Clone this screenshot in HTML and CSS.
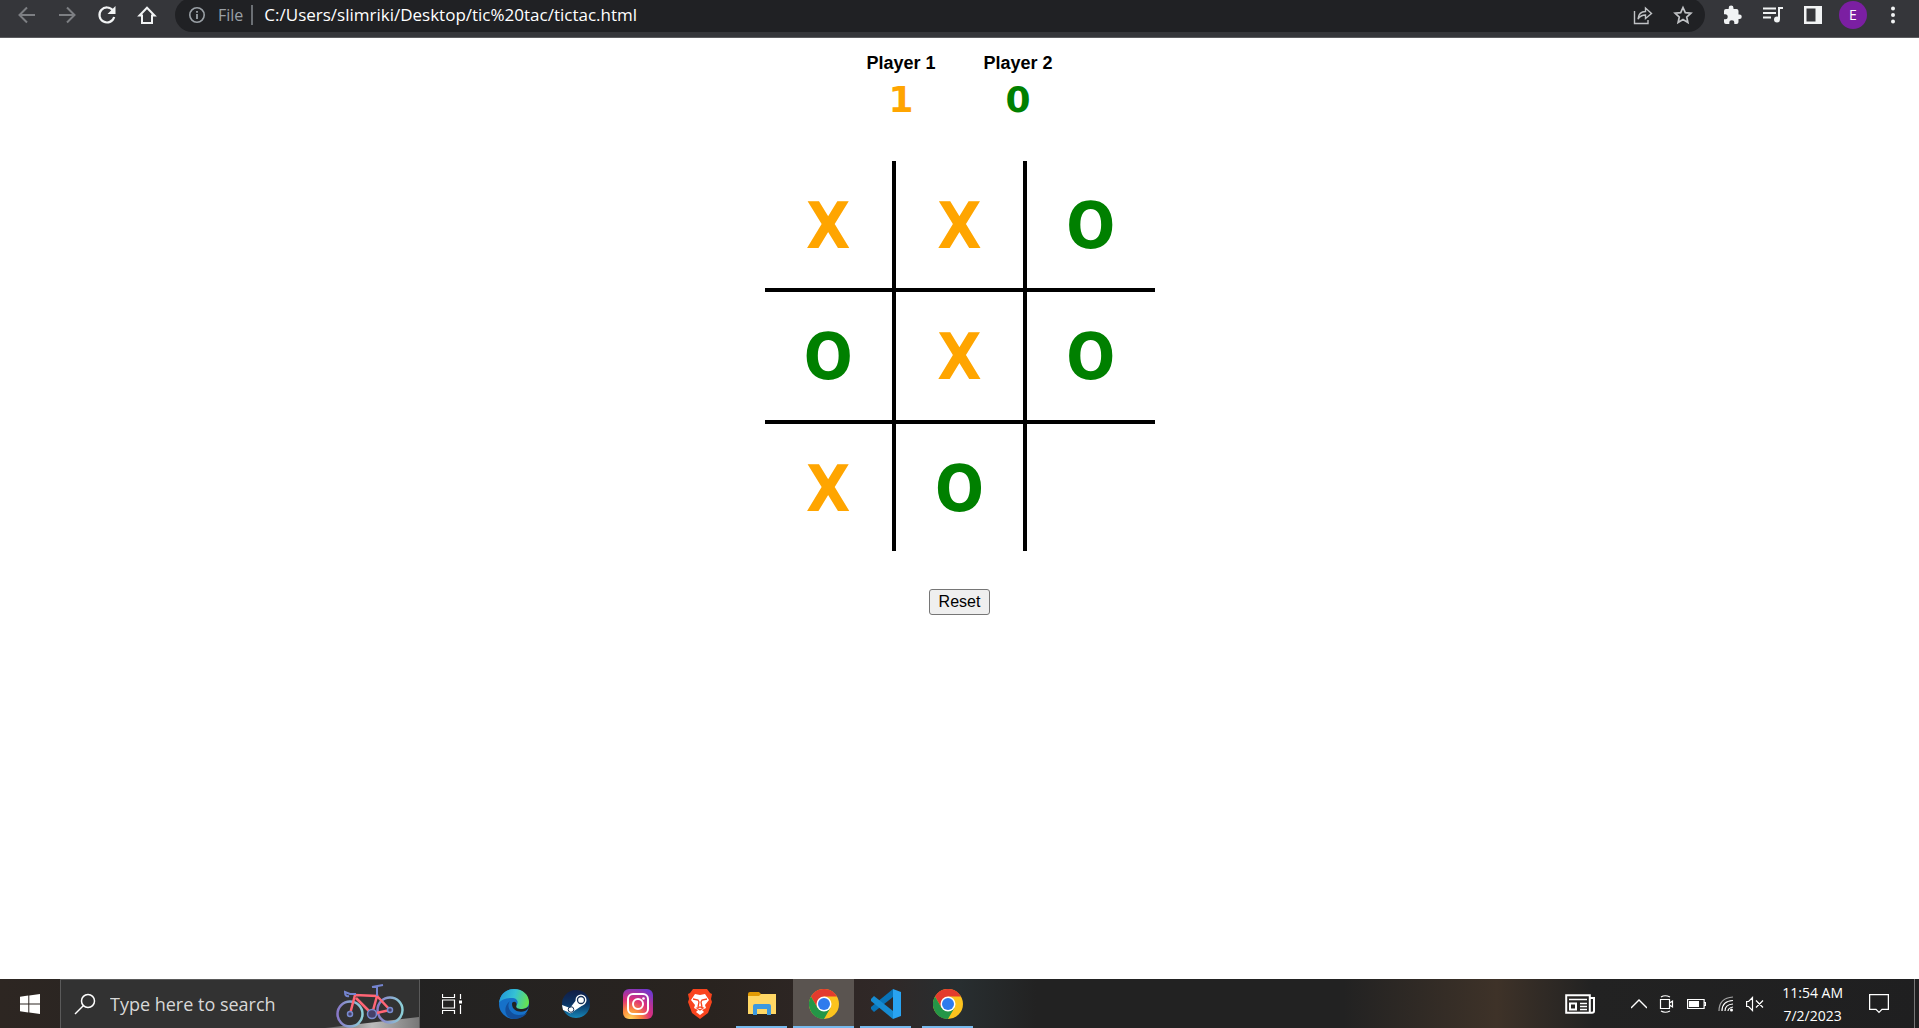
FILE: index.html
```html
<!DOCTYPE html>
<html lang="en">
<head>
<meta charset="utf-8">
<title>Tic Tac Toe</title>
<link rel="stylesheet" href="styles.css">
</head>
<body>
<header class="toolbar">
  <nav class="nav">
    <button class="icon-btn dim" aria-label="Back"><svg width="20" height="20" viewBox="0 0 20 20"><path d="M18 10H3M10 2.500l-7.500 7.500 7.500 7.500" fill="none" stroke="currentColor" stroke-width="2"/></svg></button>
    <button class="icon-btn dim" aria-label="Forward"><svg width="20" height="20" viewBox="0 0 20 20"><path d="M2 10h15M10 2.500l7.500 7.500-7.500 7.500" fill="none" stroke="currentColor" stroke-width="2"/></svg></button>
    <button class="icon-btn" aria-label="Reload"><svg width="20" height="20" viewBox="0 0 20 20"><path d="M16 5.500A7.500 7.500 0 1 0 17.200 12" fill="none" stroke="currentColor" stroke-width="2.200"/><path d="M18.500 1v8h-8z" fill="currentColor"/></svg></button>
    <button class="icon-btn" aria-label="Home"><svg width="20" height="20" viewBox="0 0 20 20"><path d="M2.500 10.500L10 2.800l7.500 7.700H15V18H5v-7.500z" fill="none" stroke="currentColor" stroke-width="2"/></svg></button>
  </nav>
  <div class="omnibox">
    <svg class="info" width="18" height="18" viewBox="0 0 18 18"><circle cx="9" cy="9" r="7.200" fill="none" stroke="currentColor" stroke-width="1.600"/><path d="M9 8v5M9 5v1.800" stroke="currentColor" stroke-width="1.800"/></svg>
    <span class="scheme">File</span>
    <input class="url" aria-label="Address" value="C:/Users/slimriki/Desktop/tic%20tac/tictac.html">
    <button class="icon-btn soft" aria-label="Share"><svg width="20" height="20" viewBox="0 0 20 20"><path d="M1.500 6v12.500H15V15M5 14c.500-5 3-7.500 7.500-7.500V3l6 5.500-6 5V10C9 10 7 11 5 14z" fill="none" stroke="currentColor" stroke-width="1.400"/></svg></button>
    <button class="icon-btn soft" aria-label="Bookmark"><svg width="20" height="20" viewBox="0 0 20 20"><path d="M10 2.500l2.300 5.200 5.600.500-4.200 3.800 1.200 5.500-4.900-2.900-4.900 2.900 1.200-5.500L2.100 8.200l5.600-.500z" fill="none" stroke="currentColor" stroke-width="1.700"/></svg></button>
  </div>
  <div class="actions">
    <button class="icon-btn" aria-label="Extensions"><svg width="20" height="20" viewBox="0 0 20 20"><path d="M16.500 9.500H15.500V6A2 2 0 0 0 13.500 4H10.500V3A2.400 2.400 0 0 0 5.700 3V4H3A2 2 0 0 0 1 6V9.300H2.200A2.500 2.500 0 0 1 2.200 14.300H1V17A2 2 0 0 0 3 19H6.300V17.800A2.500 2.500 0 0 1 11.300 17.800V19H13.500A2 2 0 0 0 15.500 17V14H16.500A2.250 2.250 0 0 0 16.500 9.500Z" fill="currentColor"/></svg></button>
    <button class="icon-btn" aria-label="Media controls"><svg width="20" height="20" viewBox="0 0 20 20"><path d="M0 3.500h13M0 8h13M0 12.500h8M16 14V3h4" fill="none" stroke="currentColor" stroke-width="2"/><circle cx="14" cy="14.500" r="3" fill="currentColor"/></svg></button>
    <button class="icon-btn" aria-label="Side panel"><svg width="20" height="20" viewBox="0 0 20 20"><path d="M1 1h18v18H1zM3.500 3.500v13h9v-13z" fill="currentColor" fill-rule="evenodd"/></svg></button>
    <button class="avatar" aria-label="Profile">E</button>
    <button class="icon-btn" aria-label="Menu"><svg width="20" height="20" viewBox="0 0 20 20"><g fill="currentColor"><circle cx="10" cy="3.500" r="2"/><circle cx="10" cy="10" r="2"/><circle cx="10" cy="16.500" r="2"/></g></svg></button>
  </div>
</header>

<main class="game">
  <section class="scores">
    <div class="player"><h2 class="name">Player 1</h2><div class="score x">1</div></div>
    <div class="player"><h2 class="name">Player 2</h2><div class="score o">0</div></div>
  </section>
  <section class="board">
    <div class="cell x">X</div><div class="cell x">X</div><div class="cell o">O</div>
    <div class="cell o">O</div><div class="cell x">X</div><div class="cell o">O</div>
    <div class="cell x">X</div><div class="cell o">O</div><div class="cell"></div>
  </section>
  <button class="reset">Reset</button>
</main>

<footer class="taskbar">
  <button class="start" aria-label="Start"><svg width="20" height="20" viewBox="0 0 20 20"><path d="M0 2.800L8.300 1.600V9.500H0zM9.300 1.400L20 0v9.500H9.300zM0 10.500h8.300v7.900L0 17.200zM9.300 10.500H20V20L9.300 18.600z" fill="#fff"/></svg></button>
  <label class="search">
    <svg width="22" height="22" viewBox="0 0 22 22"><circle cx="14" cy="8" r="6.500" fill="none" stroke="#fff" stroke-width="1.500"/><path d="M9.500 12.500L1 21" stroke="#fff" stroke-width="1.500"/></svg>
    <input class="query" aria-label="Search" placeholder="Type here to search">
    <svg class="bike" width="96" height="48" viewBox="0 0 96 48">
      <defs><linearGradient id="wheel"><stop offset="0" stop-color="#8878c8"/><stop offset="1" stop-color="#8cd0d8"/></linearGradient><linearGradient id="hill"><stop offset="0" stop-color="#555"/><stop offset=".5" stop-color="#bbb"/><stop offset="1" stop-color="#777"/></linearGradient></defs>
      <path d="M2 48L96 37V48z" fill="url(#hill)"/>
      <g fill="none" stroke="url(#wheel)" stroke-width="2.500"><circle cx="27" cy="34" r="12.500"/><circle cx="67" cy="30" r="12.500"/></g>
      <path d="M27 34L32 15 54 16 49 34 33 18M54 16L67 30 49 34" fill="none" stroke="#ff6575" stroke-width="2.500"/>
      <path d="M33 14h-6l-5-2q0 5 4 4M54 16V6M49 7l11-2" fill="none" stroke="#7484cf" stroke-width="2"/>
      <g fill="#45406a" stroke="#788bcf" stroke-width="1.500"><circle cx="27" cy="34" r="2.500"/><circle cx="67" cy="30" r="2.500"/><circle cx="49" cy="34" r="4.500"/></g>
    </svg>
  </label>
  <nav class="apps">
    <button class="app" aria-label="Task view"><svg width="20" height="20" viewBox="0 0 20 20"><path d="M.5 0v3.500h12V0M.5 6h12v8H.5zM.5 20v-3.500h12V20M18.500 0v5M18.500 11v9" fill="none" stroke="#fff" stroke-width="1.200"/><path d="M17 6.500h3v3h-3z" fill="#fff"/></svg></button>
    <button class="app" aria-label="Edge"><svg width="30" height="30" viewBox="0 0 30 30"><defs><linearGradient id="eg" x1="0" y1=".3" x2="1" y2=".5"><stop offset="0" stop-color="#2196d8"/><stop offset=".5" stop-color="#35c1d5"/><stop offset="1" stop-color="#66e34f"/></linearGradient></defs><circle cx="15" cy="15" r="15" fill="#1671c9"/><path d="M0 14C1 5 7 0 15 0c9 0 15 6 15 13 0 5-4 7-7 7-5 0-7-1-6-3 4-5 0-8-4-8C7 9 2 11 0 14z" fill="url(#eg)"/><path d="M11 12c-4 5 0 14 9 14 4 0 6-1 8-2-3 4-8 6-13 6C6 30 3 18 11 12z" fill="#124f9c"/><path d="M13 15c0-3 5-3 4.500 1-1 3 1 4 5.500 4 3 0 5-1 7-3-1 3-2 4-4 5-5 2-13 0-13-7z" fill="#222"/></svg></button>
    <button class="app" aria-label="Steam"><svg width="30" height="30" viewBox="0 0 30 30"><defs><linearGradient id="st" x2="0" y2="1"><stop stop-color="#111d45"/><stop offset=".5" stop-color="#0b3464"/><stop offset="1" stop-color="#1687b8"/></linearGradient></defs><circle cx="15" cy="15" r="14" fill="url(#st)"/><path d="M1 16l8 3 7-9 6 6-9 6q-3 4-6 1l-5-2z" fill="#fff"/><circle cx="20" cy="11" r="5.500" fill="#fff"/><circle cx="20" cy="11" r="3.500" fill="none" stroke="#173157" stroke-width="1.300"/><circle cx="10" cy="20.500" r="2.800" fill="none" stroke="#173157"/></svg></button>
    <button class="app" aria-label="Instagram"><svg width="30" height="30" viewBox="0 0 30 30"><defs><radialGradient id="ig" cx=".25" cy="1" r="1.100"><stop stop-color="#ffd55b"/><stop offset=".3" stop-color="#fb8a3c"/><stop offset=".6" stop-color="#dd2f79"/><stop offset="1" stop-color="#7138cc"/></radialGradient></defs><rect width="30" height="30" rx="6" fill="url(#ig)"/><rect x="5" y="5" width="20" height="20" rx="5" fill="none" stroke="#fff" stroke-width="2"/><circle cx="15" cy="15" r="5" fill="none" stroke="#fff" stroke-width="2"/><circle cx="20.500" cy="9.500" r="1.300" fill="#fff"/></svg></button>
    <button class="app" aria-label="Brave"><svg width="30" height="30" viewBox="0 0 30 30"><path d="M8 0h14l3 4 2 1-1 5 1 3-4 11-8 6-8-6L3 13l1-3-1-5 2-1z" fill="#f9441d"/><path d="M10 5l5 1 5-1 4 6-4 5 1 3-4 2 2 2-4 3-4-3 2-2-4-2 1-3-4-5z" fill="#fff"/><path d="M8 10l5 1 1 2-1 5M22 10l-5 1-1 2 1 5M12 19l3-1 3 1-3 2z" fill="none" stroke="#f9441d" stroke-width="1.300"/></svg></button>
    <button class="app open" aria-label="File Explorer"><svg width="30" height="30" viewBox="0 0 30 30"><path d="M1 5q0-2 2-2h9l2 2v3H1z" fill="#e29b05"/><path d="M1 7h11l2-2h15v20H1z" fill="#ffd765"/><path d="M6 26V17q0-2 2-2h14q2 0 2 2v9h-4v-6h-10v6z" fill="#3c99e0"/></svg></button>
    <button class="app open active" aria-label="Chrome"><svg width="30" height="30" viewBox="0 0 30 30"><g id="chrome"><circle cx="15" cy="15" r="15" fill="#fcc31e"/><path d="M2 7.500A15 15 0 0 1 28 7.500H15L8.500 18.800z" fill="#e33b2e"/><path d="M2 7.500A15 15 0 0 0 15 30L21.500 18.800H8.500z" fill="#249647"/><circle cx="15" cy="15" r="7.500" fill="#fff"/><circle cx="15" cy="15" r="6" fill="#2f7bed"/></g></svg></button>
    <button class="app open" aria-label="Visual Studio Code"><svg width="30" height="30" viewBox="0 0 30 30"><path d="M22 0v8L3 23l-3-3v-2z" fill="#0873b8"/><path d="M22 30v-8L3 7 0 10v2z" fill="#168bd2"/><path d="M22 0l8 3v24l-8 3z" fill="#29a3f1"/></svg></button>
    <button class="app open" aria-label="Chrome, second window"><svg width="30" height="30" viewBox="0 0 30 30"><use href="#chrome"/></svg></button>
  </nav>
  <div class="tray">
    <svg class="news" width="30" height="20" viewBox="0 0 30 20"><path d="M1.200 1.200h23.600V18.800H1.200zM25 4h4v13q0 1.800-2 1.800H24" fill="none" stroke="#fff" stroke-width="2"/><path d="M4 5.500h18M15 9.500h7M15 12.500h7M15 15.500h7" stroke="#fff" stroke-width="1.500"/><path d="M5 9.500h6v6H5z" fill="none" stroke="#fff" stroke-width="2"/></svg>
    <svg width="16" height="18" viewBox="0 0 16 18"><path d="M0 13l8-8 8 8" fill="none" stroke="#fff" stroke-width="1.400"/></svg>
    <svg width="16" height="18" viewBox="0 0 16 18"><path d="M1.500 4.500h9v9h-9zM10.500 8l3-2v6l-3-2M2 2q4-2.500 9 0M2 16q4 2.500 9 0" fill="none" stroke="#fff" stroke-width="1.200"/></svg>
    <svg width="19" height="18" viewBox="0 0 19 18"><path d="M.6 4.500h16.500v9H.6zM17 7.500h1.500v3H17" fill="none" stroke="#fff" stroke-width="1.200"/><path d="M2 6h10v6H2z" fill="#fff"/></svg>
    <svg width="16" height="18" viewBox="0 0 16 18"><g fill="none" stroke="#fff" stroke-width="1.200"><path d="M1 16Q1 3 15 2" opacity=".6"/><path d="M4 16Q4 6 15 5.500M7 16Q7 9.500 15 9"/><path d="M10 16Q10 13 15 12"/></g><circle cx="13.500" cy="15" r="1.500" fill="#fff"/></svg>
    <svg width="18" height="18" viewBox="0 0 18 18"><path d="M.6 6.500h2L6.500 2.500v13L2.600 11.500h-2zM10 5.500l7 7M17 5.500l-7 7" fill="none" stroke="#fff" stroke-width="1.200"/></svg>
    <div class="clock"><span>11:54 AM</span><span>7/2/2023</span></div>
    <svg width="20" height="20" viewBox="0 0 20 20"><path d="M.6.600h18.800v14.800H13l-3 3-3-3H.6z" fill="none" stroke="#fff" stroke-width="1.300"/></svg>
  </div>
</footer>
</body>
</html>
```
FILE: styles.css
```css
* { box-sizing: border-box; }
body {
  margin: 0;
  min-height: 100vh;
  display: flex;
  flex-direction: column;
  background: #fff;
  font-family: "Open Sans", "Noto Sans", sans-serif;
}
button { font-family: inherit; }
svg { display: block; flex: none; }

.toolbar {
  display: flex;
  height: 38px;
  padding: 0 16px 8px;
  background: #35363a;
  border-bottom: 1px solid #5b5c5f;
  color: #f1f3f4;
}
.nav { display: flex; gap: 20px; padding-left: 1px; }
.icon-btn, .avatar, .start, .app {
  border: 0;
  padding: 0;
  background: none;
  color: inherit;
  display: flex;
  align-items: center;
  justify-content: center;
}
.icon-btn { width: 20px; }
.dim { color: #7d7f83; }
.soft { color: #c0c2c5; }
.omnibox {
  flex: 1;
  display: flex;
  align-items: center;
  gap: 20px;
  margin: -2px 18px 0;
  height: 34px;
  padding: 0 12px 0 13px;
  background: #202124;
  border-radius: 17px;
}
.info { color: #9aa0a6; }
.scheme {
  margin-left: -8px;
  padding-right: 8px;
  border-right: 2px solid #6b6f74;
  color: #9aa0a6;
  font-size: 16px;
  line-height: 20px;
}
.url {
  flex: 1;
  min-width: 0;
  margin-left: -9px;
  padding: 0;
  border: 0;
  background: none;
  color: #fff;
  font: 17px/20px "Open Sans", "Noto Sans", sans-serif;
}
.actions { display: flex; align-items: center; gap: 20px; }
.avatar {
  width: 28px;
  height: 28px;
  margin: 0 -4px;
  border-radius: 50%;
  background: #7b1fa2;
  color: #fff;
  font-size: 14px;
}

.game {
  flex: 1;
  display: flex;
  flex-direction: column;
  align-items: center;
  padding-top: 14px;
  font-family: "DejaVu Sans Condensed", "DejaVu Sans", sans-serif;
  font-weight: bold;
}
.x { color: orange; }
.o { color: green; }
.scores { display: flex; gap: 48px; }
.player { text-align: center; }
.name {
  margin: 0;
  font: bold 18px/22px "Liberation Sans", Arial, sans-serif;
}
.score { font: bold 36px/52px "DejaVu Sans", sans-serif; }
.board {
  display: grid;
  grid-template: repeat(3, 1fr) / repeat(3, 1fr);
  gap: 4px;
  width: 390px;
  height: 390px;
  margin: 35px 0 38px;
  background: #000;
}
.cell {
  display: flex;
  align-items: center;
  justify-content: center;
  padding-top: 3px;
  background: #fff;
  font-size: 64px;
  line-height: 64px;
}
.reset {
  padding: 0 9px;
  border: 1px solid #767676;
  border-radius: 3px;
  background: #efefef;
  color: #000;
  font: 16px/24px "Liberation Sans", Arial, sans-serif;
}

.taskbar {
  display: flex;
  height: 49px;
  background: linear-gradient(90deg, #2d2622 0, #222 20%, #29231f 37%, #302827 46%, #282e30 50%, #222 54%, #222 70%, #3e3228 78%, #222 83%, #1f1f20 100%);
  color: #fff;
}
.start { width: 60px; }
.search {
  display: flex;
  align-items: center;
  width: 360px;
  padding-left: 13px;
  background: #323232;
  border: 1px solid #5a5a5a;
  border-bottom: 0;
}
.query {
  flex: 1;
  min-width: 0;
  margin-left: 14px;
  padding: 0;
  border: 0;
  background: none;
  color: #fff;
  font: 18px/24px "Open Sans", "Noto Sans", sans-serif;
}
.query::placeholder { color: #d8d8d8; opacity: 1; }
.apps { display: flex; gap: 1px; padding-left: 1px; }
.app { width: 61px; }
.open {
  background: linear-gradient(#76b9ed, #76b9ed) center bottom / 51px 2px no-repeat;
}
.active {
  background-color: #5a5450;
  background-size: 61px 2px;
}
.tray {
  display: flex;
  align-items: center;
  gap: 12px;
  margin-left: auto;
  padding-right: 25px;
  margin-right: 4px;
  border-right: 1px solid #777;
}
.news { margin-right: 24px; }
.clock {
  display: flex;
  flex-direction: column;
  align-items: center;
  margin: 0 14px 0 6px;
  font-size: 14px;
  line-height: 23px;
}
```
